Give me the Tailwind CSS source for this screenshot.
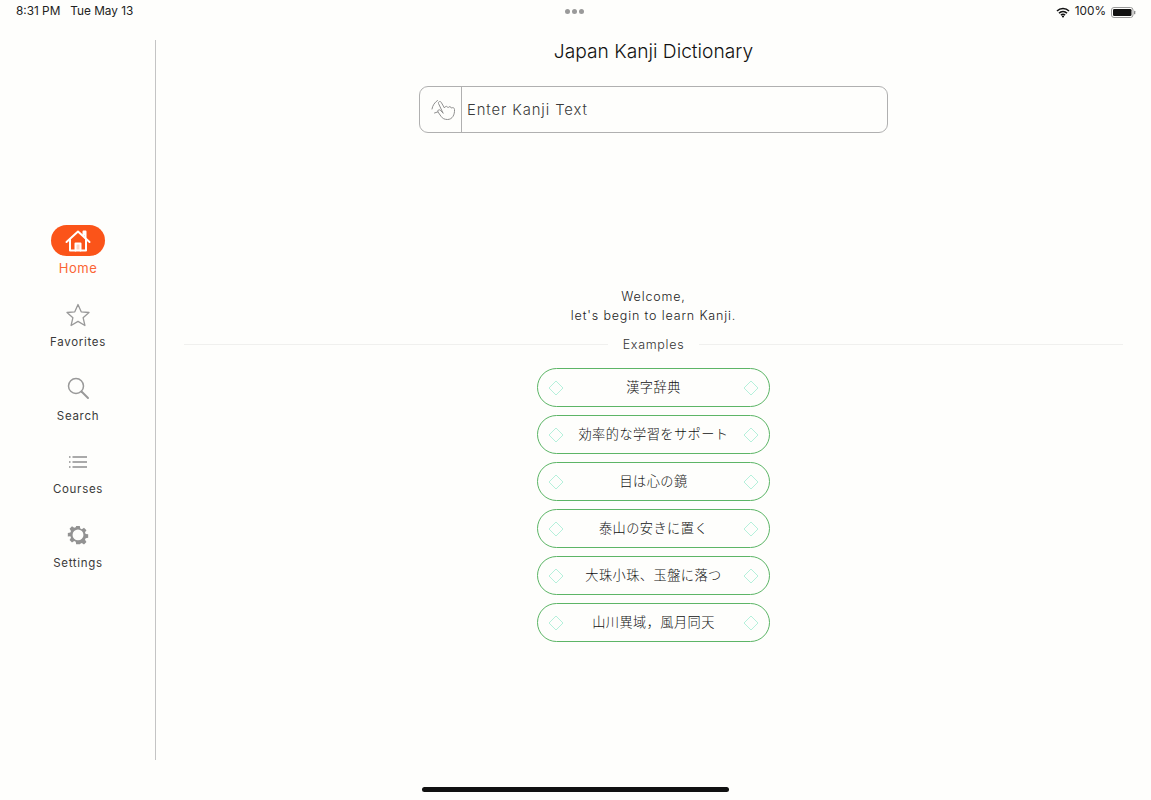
<!DOCTYPE html>
<html><head><meta charset="utf-8"><script src="https://cdn.jsdelivr.net/npm/@tailwindcss/browser@4"></script></head>
<body class="m-0 bg-[#fefefc]">
<div class="relative w-[1151px] h-[800px] overflow-hidden bg-[#fefefc] text-[#333] font-['Inter','Noto_Sans_CJK_JP',sans-serif] font-light">
  <!-- status bar -->
  <div class="h-[24px] flex items-center justify-between pl-[16px] pr-[15px] text-[11.800px] text-[#222] font-normal font-['Inter',sans-serif]">
    <div class="flex gap-[10px]"><span>8:31 PM</span><span>Tue May 13</span></div>
    <div class="flex items-center gap-[5px]">
      <svg width="14" height="11" viewBox="0 0 14 11"><path d="M1 4a8.500 8.500 0 0 1 12 0M3 6.200a5.400 5.400 0 0 1 8 0M5 8.200a2.600 2.600 0 0 1 4 0" fill="none" stroke="#111" stroke-width="1.600"/><circle cx="7" cy="9.500" r="1.100" fill="#111"/></svg>
      <span>100%</span>
      <svg width="25" height="11" viewBox="0 0 25 11"><rect x=".5" y=".5" width="21.500" height="10" rx="2.500" fill="none" stroke="#999"/><rect x="2" y="2" width="18.500" height="7" rx="1.200" fill="#111"/><rect x="23" y="3.700" width="1.300" height="3.600" rx=".6" fill="#888"/></svg>
    </div>
  </div>
  <div class="absolute top-[9px] left-[565px] flex gap-[2px]"><i class="block w-[5px] h-[5px] rounded-full bg-[#9a9a9a]"></i><i class="block w-[5px] h-[5px] rounded-full bg-[#9a9a9a]"></i><i class="block w-[5px] h-[5px] rounded-full bg-[#9a9a9a]"></i></div>

  <div class="flex h-[720px] mt-[16px]">
    <!-- sidebar -->
    <aside class="w-[156px] shrink-0 border-r border-[#c4c4c4] flex flex-col items-center pt-[185px] pl-px text-[11.500px] tracking-[0.7px] text-[#3a3a3a] font-normal">
      <div class="h-[78px] flex flex-col items-center">
        <div class="w-[54px] h-[31px] rounded-full bg-[#fb5419] flex items-center justify-center">
          <svg width="26" height="24" viewBox="0 0 26 24" fill="none" stroke="#fff" stroke-width="2" stroke-linejoin="round" stroke-linecap="round"><path d="M1.500 13 13 2.500 24.500 13"/><path d="M5 10.500v11h16v-11"/><path d="M10.500 21.500v-7h5v7" fill="#fff" fill-opacity=".75"/><path d="M18.500 6V2.500h2V9"/></svg>
        </div>
        <span class="mt-[4px] text-[13px] leading-[16px] text-[#fb6535] tracking-[0.5px] font-normal">Home</span>
      </div>
      <div class="h-[73.500px] flex flex-col items-center">
        <svg width="24" height="24" viewBox="0 0 24 24" fill="none" stroke="#999" stroke-width="1.300" stroke-linejoin="round"><path d="m12 1.500 3.200 7.300 7.800.7-5.900 5.200 1.800 7.800-6.900-4.100-6.900 4.100 1.800-7.800L1 9.500l7.800-.7z"/></svg>
        <span class="mt-[8px] leading-[14px]">Favorites</span>
      </div>
      <div class="h-[73.500px] flex flex-col items-center">
        <svg width="24" height="24" viewBox="0 1 24 24" fill="none" stroke="#999" stroke-width="1.500" stroke-linecap="round"><circle cx="10" cy="10" r="7.500"/><path d="m15.500 15.500 6.500 6.500" stroke-width="2"/></svg>
        <span class="mt-[8px] leading-[14px]">Search</span>
      </div>
      <div class="h-[73.500px] flex flex-col items-center">
        <svg width="24" height="24" viewBox="0 0 24 24" fill="none" stroke="#8e8e8e" stroke-width="1.400"><path d="M6.500 7H21M6.500 12H21M6.500 17H21"/><path d="M3 7h1.500M3 12h1.500M3 17h1.500"/></svg>
        <span class="mt-[8px] leading-[14px]">Courses</span>
      </div>
      <div class="flex flex-col items-center">
        <svg width="24" height="24" viewBox="-1.200 -0.200 26.400 26.400"><path fill="#929292" fill-rule="evenodd" d="M10 2h4l.5 2.800 1.700.7 2.400-1.600 2.700 2.700-1.600 2.400.7 1.700 2.800.5v3.800l-2.800.5-.7 1.700 1.600 2.400-2.700 2.700-2.400-1.600-1.700.7L14 22h-4l-.5-2.800-1.700-.7-2.400 1.600-2.700-2.700 1.600-2.400-.7-1.700L.800 13.500V9.700l2.800-.5.700-1.700-1.600-2.400 2.700-2.700 2.400 1.600 1.700-.7zM12 5.800a6 6 0 1 0 0 12 6 6 0 0 0 0-12z"/></svg>
        <span class="mt-[8px] leading-[14px]">Settings</span>
      </div>
    </aside>

    <!-- main -->
    <main class="flex-1 flex flex-col items-center">
      <h1 class="text-[19.200px] leading-[23px] text-[#111] font-light">Japan Kanji Dictionary</h1>
      <div class="mt-[23px] w-[469px] h-[47px] rounded-[9px] border border-[#b0b0b0] flex items-stretch">
        <div class="w-[42px] border-r border-[#b0b0b0] flex items-center justify-center">
          <svg class="ml-[4px]" width="24" height="24" viewBox="6 5 24 24" fill="none" stroke="#8f8f8f" stroke-width="1" stroke-linejoin="round" stroke-linecap="round"><path d="M18 20 13.500 10.500c-.7-1.700 1.800-2.800 2.700-1.200L19.500 15c.5-2.200 3-2 3.500-.3.800-1.600 3-1.200 3.500.4 1-1 3-.4 3 1.400.3 5-2 10-7 10-3 0-5-1-6.500-3.200L13 19c-1-1.500 1-3 2.300-1.800L18 20"/><path d="M7 16c.6-3.500 2.500-6.500 5.500-8.500M9.500 20l3-1"/></svg>
        </div>
        <div class="pl-[5px] pt-[2px] flex items-center text-[14.800px] tracking-[0.9px] text-[#3a3a3a]">Enter Kanji Text</div>
      </div>

      <div class="mt-[154px] text-center text-[12.500px] leading-[19px] tracking-[0.85px] text-[#222]"><p>Welcome,</p><p>let's begin to learn Kanji.</p></div>
      <div class="mt-[10px] w-[939px] flex items-center text-[12.500px] tracking-[0.7px] text-[#333]">
        <div class="flex-1 h-px bg-[#f0f0ee]"></div><span class="px-[15px] leading-[19px]">Examples</span><div class="flex-1 h-px bg-[#f0f0ee]"></div>
      </div>
      <div class="mt-[14px] flex flex-col gap-[8px] text-[13.200px] tracking-[0.45px] text-[#111]">
        <div class="w-[233px] h-[39px] rounded-full border border-[#5cb566] flex items-center justify-between px-[10px]"><svg width="16" height="16" viewBox="0 0 16 16"><path d="M8 1l7 7-7 7-7-7z" fill="none" stroke="#b5f0db"/></svg><span>漢字辞典</span><svg width="16" height="16" viewBox="0 0 16 16"><path d="M8 1l7 7-7 7-7-7z" fill="none" stroke="#b5f0db"/></svg></div>
        <div class="w-[233px] h-[39px] rounded-full border border-[#5cb566] flex items-center justify-between px-[10px]"><svg width="16" height="16" viewBox="0 0 16 16"><path d="M8 1l7 7-7 7-7-7z" fill="none" stroke="#b5f0db"/></svg><span>効率的な学習をサポート</span><svg width="16" height="16" viewBox="0 0 16 16"><path d="M8 1l7 7-7 7-7-7z" fill="none" stroke="#b5f0db"/></svg></div>
        <div class="w-[233px] h-[39px] rounded-full border border-[#5cb566] flex items-center justify-between px-[10px]"><svg width="16" height="16" viewBox="0 0 16 16"><path d="M8 1l7 7-7 7-7-7z" fill="none" stroke="#b5f0db"/></svg><span>目は心の鏡</span><svg width="16" height="16" viewBox="0 0 16 16"><path d="M8 1l7 7-7 7-7-7z" fill="none" stroke="#b5f0db"/></svg></div>
        <div class="w-[233px] h-[39px] rounded-full border border-[#5cb566] flex items-center justify-between px-[10px]"><svg width="16" height="16" viewBox="0 0 16 16"><path d="M8 1l7 7-7 7-7-7z" fill="none" stroke="#b5f0db"/></svg><span>泰山の安きに置く</span><svg width="16" height="16" viewBox="0 0 16 16"><path d="M8 1l7 7-7 7-7-7z" fill="none" stroke="#b5f0db"/></svg></div>
        <div class="w-[233px] h-[39px] rounded-full border border-[#5cb566] flex items-center justify-between px-[10px]"><svg width="16" height="16" viewBox="0 0 16 16"><path d="M8 1l7 7-7 7-7-7z" fill="none" stroke="#b5f0db"/></svg><span>大珠小珠、玉盤に落つ</span><svg width="16" height="16" viewBox="0 0 16 16"><path d="M8 1l7 7-7 7-7-7z" fill="none" stroke="#b5f0db"/></svg></div>
        <div class="w-[233px] h-[39px] rounded-full border border-[#5cb566] flex items-center justify-between px-[10px]"><svg width="16" height="16" viewBox="0 0 16 16"><path d="M8 1l7 7-7 7-7-7z" fill="none" stroke="#b5f0db"/></svg><span>山川異域，風月同天</span><svg width="16" height="16" viewBox="0 0 16 16"><path d="M8 1l7 7-7 7-7-7z" fill="none" stroke="#b5f0db"/></svg></div>
      </div>
    </main>
  </div>
  <div class="absolute left-[422px] top-[787px] w-[307px] h-[5px] rounded-full bg-[#111]"></div>
</div>
</body></html>
